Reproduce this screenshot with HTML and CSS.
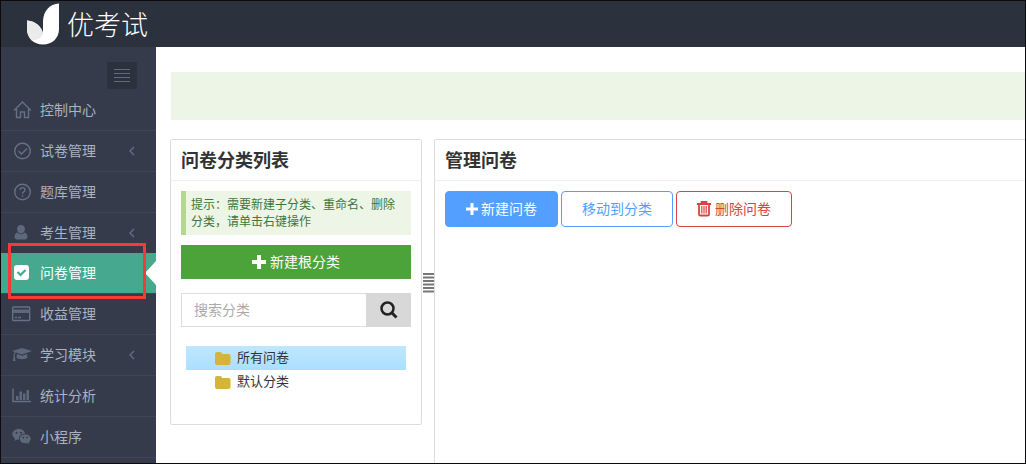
FILE: index.html
```html
<!DOCTYPE html>
<html lang="zh-CN">
<head>
<meta charset="utf-8">
<meta name="viewport" content="width=device-width, initial-scale=1">
<title>优考试 - 问卷管理</title>
<link rel="stylesheet" href="styles.css">
</head>
<body class="page">
<header class="topbar">
  <a class="brand" href="#">
    <svg class="brand-mark" viewBox="0 0 33 42" aria-hidden="true"><path fill="#fff" d="M32.500 .5V26C32.500 35 26 41.500 16.500 41.500 7 41.500 .5 35 .5 26V17.500C9 18 15.500 24 16.500 31V18C17 8 23 1 32.500 .5Z"/><path fill="#ebebec" d="M.5 17.500C9 18 15.500 24 16.500 30.500 15 35 11 37 5.500 37.500 2.500 34.500 .5 31 .5 26Z"/></svg>
    <span class="brand-name">优考试</span>
  </a>
</header>
<div class="layout">
  <nav class="sidebar">
    <button class="toggle" type="button" aria-label="折叠菜单"><svg width="16" height="14" viewBox="0 0 16 14"><path d="M0 .5H16M0 4.500H16M0 8.500H16M0 12.500H16" stroke="#606c7c"/></svg></button>
    <ul class="menu">
      <li class="item"><a class="link" href="#"><svg class="icon" viewBox="0 0 20 20"><path class="line" d="M2 10.500 10.500 2 19 10.500M4.500 9V17.500H8.500V12H12.500V17.500H16.500V9"/></svg><span>控制中心</span></a></li>
      <li class="item"><a class="link" href="#"><svg class="icon" viewBox="0 0 20 20"><circle class="line" cx="10.500" cy="10" r="7.800"/><path class="line" d="M6.500 10 9.500 13 15 7.500"/></svg><span>试卷管理</span><svg class="arrow" viewBox="0 0 6 10"><path d="M5 1 1 5 5 9"/></svg></a></li>
      <li class="item"><a class="link" href="#"><svg class="icon" viewBox="0 0 20 20"><circle class="line" cx="10.500" cy="10" r="7.800"/><path class="line" d="M8 8C8 4.800 13 5 13 8 13 9.800 10.500 9.700 10.500 12M10.500 13.300V14.800"/></svg><span>题库管理</span><!-- no submenu --></a></li>
      <li class="item"><a class="link" href="#"><svg class="icon" viewBox="0 0 20 20"><path class="solid" d="M9 2C11.500 2 13 3.700 13 6S11.500 10.500 9 10.500 5 8.300 5 6 6.500 2 9 2ZM5.500 9.500C7.500 11.800 10.500 11.800 12.500 9.500 14.500 9.800 15.500 11.600 15.500 13.800 15.500 15.800 14.500 16.500 13 16.500H5C3.500 16.500 2.500 15.800 2.500 13.800 2.500 11.600 3.500 9.800 5.500 9.500Z"/></svg><span>考生管理</span><svg class="arrow" viewBox="0 0 6 10"><path d="M5 1 1 5 5 9"/></svg></a></li>
      <li class="item item-active"><a class="link" href="#" aria-current="page"><svg class="icon" viewBox="0 0 20 20"><rect x="2" y="2" width="15" height="15" rx="3" fill="#fff"/><path d="M5.500 9 8.500 12 13.500 7" fill="none" stroke="#45a88f" stroke-width="2.200"/></svg><span>问卷管理</span></a></li>
      <li class="item"><a class="link" href="#"><svg class="icon" viewBox="0 0 20 20"><rect class="line" x=".7" y="3" width="17" height="13.500" rx="1"/><path class="solid" d="M1 5.500H18V9H1Z"/><path class="line" d="M3 13.500H5M6 13.500H9"/></svg><span>收益管理</span></a></li>
      <li class="item"><a class="link" href="#"><svg class="icon" viewBox="0 0 20 20"><path class="solid" d="M10 3 20 6 10 9.500 4 7.400C3 8.200 2.800 9 2.800 10.500L3.500 16H1L1.700 10.500C1.500 9 2 7.700 2.700 7L0 6ZM5 9 10 10.700 15 9 15.500 12.500C14.500 14.700 5.500 14.700 4.500 12.500Z"/></svg><span>学习模块</span><svg class="arrow" viewBox="0 0 6 10"><path d="M5 1 1 5 5 9"/></svg></a></li>
      <li class="item"><a class="link" href="#"><svg class="icon" viewBox="0 0 20 20"><path class="line" d="M1 2.500V15.500H19"/><path class="solid" d="M4 10H6.500V14H4ZM7.500 5.500H10V14H7.500ZM11 7.500H13.500V14H11ZM14.500 4H17V14H14.500Z"/></svg><span>统计分析</span></a></li>
      <li class="item"><a class="link" href="#"><svg class="icon" viewBox="0 0 20 20"><path class="solid" fill-rule="evenodd" d="M7 2C10 2 12.700 4 13 6.500 9.500 6.500 6.500 9 7 12.700L5 12.500 2.500 14 3 11.500C-2 8 .5 2 7 2ZM4.500 4.700a1 1 0 1 0 .1 0ZM9 4.700a1 1 0 1 0 .1 0ZM13 7.500C16.500 7.500 18.700 9.500 18.700 11.800 18.700 13.300 18 14.500 16.700 15.300L17.200 17 15.200 16C11 17 7.800 14.800 7.800 11.800 7.800 9.500 10 7.500 13 7.500ZM11.300 9.800a.8.800 0 1 0 .1 0ZM15 9.800a.8.800 0 1 0 .1 0Z"/></svg><span>小程序</span></a></li>
      <li class="item item-end"></li>
    </ul>
    <div class="highlight"></div>
  </nav>
  <main class="content">
    <div class="notice"></div>
    <div class="columns">
      <section class="panel panel-list">
        <h2 class="panel-title">问卷分类列表</h2>
        <div class="panel-body">
          <p class="tip">提示：需要新建子分类、重命名、删除分类，请单击右键操作</p>
          <button class="add-root" type="button"><svg width="14" height="14" viewBox="0 0 14 14" fill="#fff"><path d="M5 0H9V5H14V9H9V14H5V9H0V5H5Z"/></svg><span>新建根分类</span></button>
          <form class="search">
            <input class="search-input" type="text" placeholder="搜索分类" aria-label="搜索分类">
            <button class="search-button" type="button" aria-label="搜索"><svg width="18" height="18" viewBox="0 0 18 18" fill="none" stroke="#222" stroke-width="2.500"><circle cx="7.500" cy="7.500" r="6"/><path d="M11.800 11.800 16.500 16.500" stroke-width="3"/></svg></button>
          </form>
          <ul class="tree">
            <li><a class="node node-selected" href="#"><svg class="folder" viewBox="0 0 16 14"><path d="M2 1H5C6.500 1 7 1.700 7 3H13.500Q15.500 3 15.500 5V12Q15.500 14 13.500 14H2Q0 14 0 12V3Q0 1 2 1Z"/></svg><span>所有问卷</span></a></li>
            <li><a class="node" href="#"><svg class="folder" viewBox="0 0 16 14"><path d="M2 1H5C6.500 1 7 1.700 7 3H13.500Q15.500 3 15.500 5V12Q15.500 14 13.500 14H2Q0 14 0 12V3Q0 1 2 1Z"/></svg><span>默认分类</span></a></li>
          </ul>
        </div>
      </section>
      <div class="splitter"><svg width="11" height="20" viewBox="0 0 11 20"><path d="M0 1H11M0 4.500H11M0 8H11M0 11.500H11M0 15H11M0 18.500H11" stroke="#777" stroke-width="1.800"/></svg></div>
      <section class="panel panel-main">
        <h2 class="panel-title">管理问卷</h2>
        <div class="panel-body actions">
          <button class="btn btn-primary" type="button"><svg width="12" height="12" viewBox="0 0 12 12" fill="#fff"><path d="M4.500 0H7.500V4.500H12V7.500H7.500V12H4.500V7.500H0V4.500H4.500Z"/></svg><span>新建问卷</span></button>
          <button class="btn btn-outline" type="button"><span>移动到分类</span></button>
          <button class="btn btn-danger" type="button"><svg width="14" height="16" viewBox="0 0 14 16" fill="none" stroke="#d64540" stroke-width="1.800"><path d="M0 3H14M4.500 3V1H9.500V3M2 3V13.500Q2 14.500 3.500 14.500H10.500Q12 14.500 12 13.500V3"/><path d="M4.800 5V12.500M7 5V12.500M9.200 5V12.500" stroke-width="1.200"/></svg><span>删除问卷</span></button>
        </div>
      </section>
    </div>
  </main>
</div>
</body>
</html>
```

FILE: styles.css
```css
* { box-sizing: border-box; }

.page {
  margin: 0;
  min-height: 100vh;
  display: flex;
  flex-direction: column;
  border: 1px solid #0b0b0d;
  background: #fff;
  color: #333;
  font: 14px/20px "Noto Sans CJK SC", sans-serif;
}

button, input { font: inherit; }
button { cursor: pointer; }
a { color: inherit; text-decoration: none; }
ul { list-style: none; margin: 0; padding: 0; }
svg { flex: none; }

.topbar {
  display: flex;
  align-items: center;
  height: 46px;
  padding-left: 25px;
  background: #2b313d;
}
.brand { display: flex; align-items: center; gap: 7px; color: #fff; }
.brand-mark { width: 34px; height: 42px; }
.brand-name { font-size: 27px; line-height: 40px; font-weight: 300; }

.layout { flex: 1; display: flex; }

.sidebar {
  position: relative;
  flex: none;
  width: 155px;
  padding-top: 15px;
  background: #353b4a;
  color: #aab2c3;
}
.toggle {
  display: flex;
  align-items: center;
  justify-content: center;
  width: 30px;
  height: 27px;
  margin-left: 106px;
  padding: 0;
  border: 0;
  background: #2b313d;
}
.item { border-top: 1px solid #3c4656; }
.item:first-child { border-top-color: transparent; }
.link { display: flex; align-items: center; height: 40px; padding: 0 21px 0 11px; }
.link span { flex: 1; }
.link span, .btn span, .add-root span, .node span { padding-bottom: 2px; }
.icon { width: 20px; height: 20px; margin-right: 8px; }
.line { fill: none; stroke: #657184; stroke-width: 1.400; }
.solid { fill: #5d697b; }
.arrow { width: 6px; height: 10px; fill: none; stroke: #657184; stroke-width: 1.300; }
.item-active {
  position: relative;
  border-top: 0;
  background: #45a88f;
  color: #fff;
}
.item-active::after {
  content: "";
  position: absolute;
  top: 8px;
  right: 0;
  border: 12px solid transparent;
  border-left: 0;
  border-right: 11px solid #fff;
}
.highlight {
  position: absolute;
  top: 196px;
  left: 7px;
  width: 138px;
  height: 56px;
  border: 3px solid #f93939;
  pointer-events: none;
}

.content {
  flex: 1;
  min-width: 0;
  display: flex;
  flex-direction: column;
  padding: 25px 0 0 14px;
}
.notice { height: 48px; margin: 0 0 19px 1px; background: #edf5e6; }

.columns { flex: 1; display: flex; }
.panel { border: 1px solid #ddd; border-radius: 2px; }
.panel-list { width: 252px; align-self: flex-start; padding-bottom: 20px; }
.panel-main { flex: 1; border-width: 1px 0 0 1px; border-radius: 2px 0 0 0; }
.panel-title {
  margin: 0;
  padding: 0 10px 2px;
  border-bottom: 1px solid #eee;
  font-size: 18px;
  line-height: 38px;
  font-weight: 700;
}
.panel-body { padding: 10px; }
.splitter { width: 12px; padding: 134px 0 0 1px; }
.splitter svg { display: block; }

.tip {
  margin: 0 0 10px;
  padding: 4px 10px 6px 5px;
  border-left: 5px solid #b5d794;
  background: #edf5e6;
  color: #3c763d;
  font-size: 12px;
  line-height: 17px;
}
.add-root {
  display: flex;
  align-items: center;
  justify-content: center;
  gap: 4px;
  width: 100%;
  height: 34px;
  border: 0;
  background: #4ba339;
  color: #fff;
}
.search { display: flex; height: 34px; margin: 14px 0 19px; }
.search-input {
  flex: 1;
  min-width: 0;
  padding: 0 12px 2px;
  border: 1px solid #ddd;
  border-right: 0;
}
.search-input::placeholder { color: #aaa; opacity: 1; }
.search-button {
  display: flex;
  align-items: center;
  justify-content: center;
  width: 45px;
  padding: 0;
  border: 0;
  background: #d8d8d8;
}
.tree { margin: 0 5px; }
.node {
  display: flex;
  align-items: center;
  gap: 6px;
  height: 24px;
  padding-left: 29px;
  font-size: 13px;
}
.node-selected { background: linear-gradient(#bfe7ff, #abdfff); }
.folder { width: 16px; height: 14px; fill: #d5b43c; }

.actions { display: flex; gap: 3px; }
.btn {
  display: flex;
  align-items: center;
  justify-content: center;
  gap: 4px;
  height: 36px;
  padding: 0 20px;
  border: 1px solid #529fff;
  border-radius: 4px;
  background: #fff;
  color: #529fff;
}
.btn-primary { gap: 3px; background: #529fff; color: #fff; }
.btn-danger { border-color: #d64540; color: #d64540; }
```
